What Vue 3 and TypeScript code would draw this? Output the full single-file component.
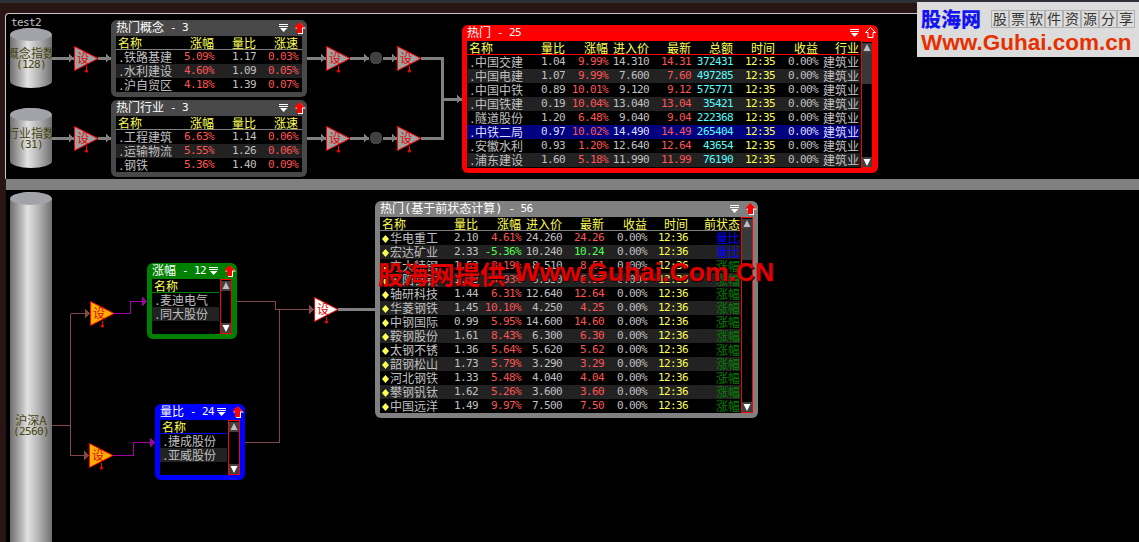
<script setup lang="ts">
interface Col {
  label: string
  w: number
  kind?: 'name' | 'red' | 'plain' | 'cyan' | 'time' | 'cjk' | 'state'
}
interface Row {
  cells: string[]
  down?: boolean
  selected?: boolean
}
interface Panel {
  id: string
  title: string
  count: number
  x: number
  y: number
  w: number
  h: number
  color: string
  line: string
  bullet?: boolean
  outlineArrow?: boolean
  scroll?: 'thumb' | 'plain'
  cols: Col[]
  rows: Row[]
}

const toRows = (list: string[][]): Row[] => list.map((cells) => ({ cells }))

const sectorCols: Col[] = [
  { label: '名称', w: 56, kind: 'name' },
  { label: '涨幅', w: 42, kind: 'red' },
  { label: '量比', w: 42, kind: 'plain' },
  { label: '涨速', w: 42, kind: 'red' },
]

const hotRows = toRows([
  ['中国交建', '1.04', '9.99%', '14.310', '14.31', '372431', '12:35', '0.00%', '建筑业'],
  ['中国电建', '1.07', '9.99%', '7.600', '7.60', '497285', '12:35', '0.00%', '建筑业'],
  ['中国中铁', '0.89', '10.01%', '9.120', '9.12', '575771', '12:35', '0.00%', '建筑业'],
  ['中国铁建', '0.19', '10.04%', '13.040', '13.04', '35421', '12:35', '0.00%', '建筑业'],
  ['隧道股份', '1.20', '6.48%', '9.040', '9.04', '222368', '12:35', '0.00%', '建筑业'],
  ['中铁二局', '0.97', '10.02%', '14.490', '14.49', '265404', '12:35', '0.00%', '建筑业'],
  ['安徽水利', '0.93', '1.20%', '12.640', '12.64', '43654', '12:35', '0.00%', '建筑业'],
  ['浦东建设', '1.60', '5.18%', '11.990', '11.99', '76190', '12:35', '0.00%', '建筑业'],
])
hotRows[5].selected = true

const stateRows = toRows([
  ['华电重工', '2.10', '4.61%', '24.260', '24.26', '0.00%', '12:36', '量比'],
  ['宏达矿业', '2.33', '-5.36%', '10.240', '10.24', '0.00%', '12:36', '量比'],
  ['方大特钢', '1.52', '8.19%', '8.510', '8.51', '0.00%', '12:36', '涨幅'],
  ['安阳钢铁', '1.38', '6.93%', '6.530', '6.53', '0.00%', '12:36', '涨幅'],
  ['轴研科技', '1.44', '6.31%', '12.640', '12.64', '0.00%', '12:36', '涨幅'],
  ['华菱钢铁', '1.45', '10.10%', '4.250', '4.25', '0.00%', '12:36', '涨幅'],
  ['中钢国际', '0.99', '5.95%', '14.600', '14.60', '0.00%', '12:36', '涨幅'],
  ['鞍钢股份', '1.61', '8.43%', '6.300', '6.30', '0.00%', '12:36', '涨幅'],
  ['太钢不锈', '1.36', '5.64%', '5.620', '5.62', '0.00%', '12:36', '涨幅'],
  ['韶钢松山', '1.73', '5.79%', '3.290', '3.29', '0.00%', '12:36', '涨幅'],
  ['河北钢铁', '1.33', '5.48%', '4.040', '4.04', '0.00%', '12:36', '涨幅'],
  ['攀钢钒钛', '1.62', '5.26%', '3.600', '3.60', '0.00%', '12:36', '涨幅'],
  ['中国远洋', '1.49', '9.97%', '7.500', '7.50', '0.00%', '12:36', '涨幅'],
])
stateRows[1].down = true

const GREY = '#808080'
const BROWN = '#804848'
const PURPLE = '#a000a0'
const NODE_GREY = '#a0a0a0'
const NODE_ORANGE = '#ffb000'

// everything below is in page coordinates, place() moves it into its pane
const panes = [
  {
    id: 'top',
    label: 'test2',
    origin: { x: 6, y: 14 },
    size: { w: 1133, h: 165 },
    wires: [
      { d: 'M52 58H74M98 58H111M307 58H326M350 58H369M383 58H397M421 58H442V138H421', color: GREY, width: 3 },
      { d: 'M52 138H74M98 138H111M307 138H326M350 138H369M383 138H397M442 99H462', color: GREY, width: 3 },
    ],
    arrows: [74, 111, 326, 369, 397]
      .flatMap((x) => [
        { x, y: 58, color: GREY },
        { x, y: 138, color: GREY },
      ])
      .concat([{ x: 462, y: 99, color: GREY }]),
    joints: [
      { x: 376, y: 58 },
      { x: 376, y: 138 },
    ],
    triangles: [74, 326, 397].flatMap((x) => [
      { x, y: 46, fill: NODE_GREY },
      { x, y: 126, fill: NODE_GREY },
    ]),
    cylinders: [
      { id: 'a', x: 10, y: 28, h: 60, name: '概念指数', count: '(128)' },
      { id: 'b', x: 10, y: 108, h: 60, name: '行业指数', count: '(31)' },
    ],
    panels: [
      {
        id: 'concept', title: '热门概念', count: 3, x: 111, y: 20, w: 196, h: 77, color: '#484848', line: '#808080',
        cols: sectorCols,
        rows: toRows([
          ['铁路基建', '5.09%', '1.17', '0.03%'],
          ['水利建设', '4.60%', '1.09', '0.05%'],
          ['沪自贸区', '4.18%', '1.39', '0.07%'],
        ]),
      },
      {
        id: 'industry', title: '热门行业', count: 3, x: 111, y: 100, w: 196, h: 77, color: '#484848', line: '#808080',
        cols: sectorCols,
        rows: toRows([
          ['工程建筑', '6.63%', '1.14', '0.06%'],
          ['运输物流', '5.55%', '1.26', '0.06%'],
          ['钢铁', '5.36%', '1.40', '0.09%'],
        ]),
      },
      {
        id: 'hot', title: '热门', count: 25, x: 462, y: 25, w: 416, h: 148, color: '#ff0000', line: '#ff0000',
        scroll: 'thumb', outlineArrow: true,
        cols: [
          { label: '名称', w: 56, kind: 'name' },
          { label: '量比', w: 42, kind: 'plain' },
          { label: '涨幅', w: 43, kind: 'red' },
          { label: '进入价', w: 41, kind: 'plain' },
          { label: '最新', w: 42, kind: 'red' },
          { label: '总额', w: 42, kind: 'cyan' },
          { label: '时间', w: 42, kind: 'time' },
          { label: '收益', w: 43, kind: 'plain' },
          { label: '行业', w: 41, kind: 'cjk' },
        ],
        rows: hotRows,
      },
    ] as Panel[],
  },
  {
    id: 'bottom',
    label: '',
    origin: { x: 6, y: 190 },
    size: { w: 1133, h: 352 },
    wires: [
      { d: 'M52 425.5H70.5M70.5 313.5V455.5M70.5 313.5H90M70.5 455.5H89', color: BROWN, width: 1 },
      { d: 'M237 301.5H275.5V309.5H314M245 442.5H279.5V309.5', color: BROWN, width: 1 },
      { d: 'M114 313.5H130.5V301.5H147M113 455.5H133.5V442.5H155', color: PURPLE, width: 1 },
      { d: 'M338 309.5H375', color: GREY, width: 3 },
    ],
    arrows: [
      { x: 90, y: 313.5, color: BROWN },
      { x: 89, y: 455.5, color: BROWN },
      { x: 314, y: 309.5, color: BROWN },
      { x: 147, y: 301.5, color: PURPLE },
      { x: 155, y: 442.5, color: PURPLE },
    ],
    joints: [],
    triangles: [
      { x: 90, y: 301, fill: NODE_ORANGE },
      { x: 89, y: 443, fill: NODE_ORANGE },
      { x: 314, y: 297, fill: '#ffffff' },
    ],
    cylinders: [{ id: 'c', x: 10, y: 192, h: 467, name: '沪深A', count: '(2560)' }],
    panels: [
      {
        id: 'chg', title: '涨幅', count: 12, x: 147, y: 263, w: 90, h: 76, color: '#008000', line: '#008000', scroll: 'plain',
        cols: [{ label: '名称', w: 68, kind: 'name' }],
        rows: toRows([['麦迪电气'], ['同大股份']]),
      },
      {
        id: 'ratio', title: '量比', count: 24, x: 155, y: 404, w: 90, h: 76, color: '#0000ff', line: '#0000ff', scroll: 'plain',
        cols: [{ label: '名称', w: 68, kind: 'name' }],
        rows: toRows([['捷成股份'], ['亚威股份']]),
      },
      {
        id: 'state', title: '热门(基于前状态计算)', count: 56, x: 375, y: 201, w: 383, h: 217, color: '#808080', line: '#808080',
        bullet: true, scroll: 'thumb',
        cols: [
          { label: '名称', w: 55, kind: 'name' },
          { label: '量比', w: 43, kind: 'plain' },
          { label: '涨幅', w: 43, kind: 'red' },
          { label: '进入价', w: 41, kind: 'plain' },
          { label: '最新', w: 42, kind: 'red' },
          { label: '收益', w: 43, kind: 'plain' },
          { label: '时间', w: 41, kind: 'time' },
          { label: '前状态', w: 52, kind: 'state' },
        ],
        rows: stateRows,
      },
    ] as Panel[],
  },
]

const logoTiles = ['股', '票', '软', '件', '资', '源', '分', '享']

function place(n: { x: number; y: number; w?: number; h?: number }, origin: { x: number; y: number }) {
  return {
    left: `${n.x - origin.x}px`,
    top: `${n.y - origin.y}px`,
    width: n.w ? `${n.w}px` : undefined,
    height: n.h ? `${n.h}px` : undefined,
  }
}

function arrowPoints(a: { x: number; y: number }) {
  return `${a.x},${a.y} ${a.x - 5},${a.y - 4.5} ${a.x - 5},${a.y + 4.5}`
}

function gridOf(p: Panel) {
  return { gridTemplateColumns: p.cols.map((c) => `${c.w}px`).join(' ') }
}

function cellClass(col: Col, row: Row, value: string) {
  if (col.kind === 'red' && row.down) return 'c-green'
  if (col.kind === 'state') return value === '量比' ? 'c-state-blue cjk' : 'c-state-green cjk'
  return `c-${col.kind ?? 'plain'}`
}
</script>

<template>
  <div class="screen">
    <div class="titlebar"></div>
    <div class="menubar"></div>

    <template v-for="(pane, n) in panes" :key="pane.id">
      <div v-if="n > 0" class="splitter"></div>
      <section class="pane" :class="`pane-${pane.id}`">
        <span v-if="pane.label" class="pane-name">{{ pane.label }}</span>

        <svg
          class="wires"
          :viewBox="`${pane.origin.x} ${pane.origin.y} ${pane.size.w} ${pane.size.h}`"
          :width="pane.size.w"
          :height="pane.size.h"
        >
          <path v-for="w in pane.wires" :key="w.d" :d="w.d" fill="none" :stroke="w.color" :stroke-width="w.width" />
          <polygon v-for="a in pane.arrows" :key="`${a.x}-${a.y}`" :points="arrowPoints(a)" :fill="a.color" />
          <circle v-for="j in pane.joints" :key="j.y" :cx="j.x" :cy="j.y" r="6.5" fill="#404040" />
        </svg>

        <div v-for="c in pane.cylinders" :key="c.id" class="cyl" :style="place(c, pane.origin)">
          <span>{{ c.name }}</span>
          <span class="cyl-count">{{ c.count }}</span>
        </div>

        <svg
          v-for="t in pane.triangles"
          :key="`${t.x}-${t.y}`"
          class="tri"
          :style="place(t, pane.origin)"
          width="25"
          height="28"
          viewBox="0 0 25 28"
        >
          <path d="M12.5 20V24" stroke="#ff0000" />
          <circle cx="12.5" cy="25" r="1.6" fill="#ff0000" />
          <polygon points="0.5,0.5 24,12.5 0.5,24.5" :fill="t.fill" stroke="#ff0000" />
          <text x="3" y="17" class="tri-text">设</text>
        </svg>

        <div
          v-for="p in pane.panels"
          :key="p.id"
          class="panel"
          :style="[place(p, pane.origin), { background: p.color }]"
        >
          <div class="panel-title">
            <span class="title-text">{{ p.title }}</span>
            <span class="mono suffix"> - {{ p.count }}</span>
            <svg class="ico-menu" width="10" height="10" viewBox="0 0 10 10">
              <path d="M0 1.5H9M0 3.5H9" stroke="#fff" />
              <path d="M1 5H8.5L4.5 9Z" fill="#fff" />
            </svg>
            <svg class="ico-up" width="12" height="12" viewBox="0 0 12 12">
              <template v-if="p.outlineArrow">
                <path d="M5.5 0.5L10.5 5.5H8V10.5H3V5.5H0.5Z" fill="#ff0000" stroke="#fff" />
              </template>
              <template v-else>
                <path d="M6.5 1L12 6.5H9V12H4V6.5H1Z" fill="#fff" />
                <path d="M5.5 0L11 5.5H8V11H3V5.5H0Z" fill="#ff0000" />
              </template>
            </svg>
          </div>
          <div class="panel-body">
            <div class="table">
              <div class="head" :style="[gridOf(p), { borderColor: p.line }]">
                <span v-for="c in p.cols" :key="c.label" :class="{ left: c.kind === 'name' }">{{ c.label }}</span>
              </div>
              <div
                v-for="r in p.rows"
                :key="r.cells[0]"
                class="row"
                :class="{ selected: r.selected }"
                :style="gridOf(p)"
              >
                <template v-for="(c, i) in p.cols" :key="c.label">
                  <span v-if="c.kind === 'name'" class="name"
                    ><i v-if="p.bullet" class="bullet"></i><span v-else class="dot mono">.</span>{{ r.cells[i] }}</span
                  >
                  <span v-else class="cell" :class="cellClass(c, r, r.cells[i])">{{ r.cells[i] }}</span>
                </template>
              </div>
            </div>
            <div v-if="p.scroll" class="scroll" :class="{ 'scroll-small': p.scroll === 'plain' }">
              <svg class="scroll-btn" width="10" height="10" viewBox="0 0 10 10">
                <rect width="10" height="10" fill="#404040" />
                <path d="M5 1L8.5 8H1.5Z" fill="#c0c0c0" />
              </svg>
              <div class="thumb"></div>
              <svg class="scroll-btn" width="10" height="10" viewBox="0 0 10 10">
                <rect width="10" height="10" fill="#404040" />
                <path d="M1.5 2H8.5L5 9Z" fill="#fff" />
              </svg>
            </div>
          </div>
        </div>
      </section>
    </template>

    <div class="logo">
      <div class="logo-top">
        <strong class="logo-name">股海网</strong>
        <div class="logo-tiles">
          <span v-for="t in logoTiles" :key="t">{{ t }}</span>
        </div>
      </div>
      <div class="logo-url">Www.Guhai.com.cn</div>
    </div>

    <div class="watermark">
      <span class="watermark-cn">股海网提供</span>
      <span class="watermark-en">Www.Guhai.Com.CN</span>
    </div>
  </div>
</template>

<style scoped>
.screen {
  position: relative;
  width: 1139px;
  height: 542px;
  overflow: hidden;
  display: flex;
  flex-direction: column;
  background: #2a1515;
  font-family: "Noto Sans CJK SC", "DejaVu Sans", sans-serif;
  font-size: 12px;
}
.titlebar {
  height: 3px;
  background: #2e3038;
}
.menubar {
  height: 10px;
}
.pane {
  position: relative;
  background: #000;
  overflow: hidden;
}
.pane-top {
  height: 166px;
  margin-left: 5px;
  border-top: 1px solid #c8c8c8;
  border-left: 1px solid #c8c8c8;
  border-top-left-radius: 4px;
  box-sizing: border-box;
}
.pane-bottom {
  flex: 1;
  margin-left: 6px;
}
.splitter {
  height: 11px;
  margin-left: 6px;
  background: #808080;
}
.pane-name {
  position: absolute;
  left: 5px;
  top: 2px;
  color: #c0c0c0;
  font: 11px/14px "DejaVu Sans Mono", monospace;
  letter-spacing: -0.6px;
}
.wires {
  position: absolute;
  left: 0;
  top: 0;
  shape-rendering: crispEdges;
}
.tri {
  position: absolute;
}
.tri-text {
  fill: #e00000;
  font-size: 12px;
  font-family: "Noto Sans CJK SC", sans-serif;
}

.cyl {
  position: absolute;
  width: 42px;
  box-sizing: border-box;
  display: flex;
  flex-direction: column;
  align-items: center;
  justify-content: center;
  overflow: hidden;
  border-radius: 21px / 7px;
  background: linear-gradient(90deg, #6f6f6f 0%, #a8a8a8 22%, #e2e2e2 42%, #b4b4b4 68%, #707070 100%);
  color: #45450f;
  font-size: 12px;
  line-height: 12px;
  white-space: nowrap;
}
.cyl::before {
  content: "";
  position: absolute;
  left: 0;
  right: 0;
  top: 0;
  height: 13px;
  border-radius: 50%;
  background: #a2a2aa;
}
.cyl-count {
  font-family: "DejaVu Sans Mono", monospace;
  font-size: 11px;
  line-height: 11px;
  letter-spacing: -0.6px;
}

.panel {
  position: absolute;
  box-sizing: border-box;
  display: flex;
  flex-direction: column;
  padding: 0 1px 5px 5px;
  border-radius: 6px;
}
.panel-title {
  height: 16px;
  flex: none;
  display: flex;
  align-items: center;
  color: #fff;
  line-height: 16px;
  white-space: pre;
}
.title-text {
  font-family: "DejaVu Sans Mono", "Noto Sans CJK SC", monospace;
  font-size: 12px;
}
.ico-menu {
  margin-left: auto;
  flex: none;
}
.ico-up {
  margin-left: 5px;
  flex: none;
}
.panel-body {
  flex: 1;
  min-height: 0;
  display: flex;
  margin-right: 4px;
  background: #000;
}
.table {
  flex: 1;
  min-width: 0;
  overflow: hidden;
}
.head,
.row {
  display: grid;
  height: 14px;
  line-height: 14px;
  white-space: nowrap;
}
.head {
  box-sizing: border-box;
  border-bottom: 1px solid;
  line-height: 13px;
  color: #ffff54;
  text-align: right;
}
.head .left {
  text-align: left;
  padding-left: 2px;
}
.row:nth-of-type(odd) {
  background: #222;
}
.row.selected {
  background: #000080;
}
.row.selected .name,
.row.selected .c-plain,
.row.selected .c-cjk {
  color: #dcdcff;
}
.name {
  color: #c0c0c0;
  padding-left: 2px;
}
.dot {
  display: inline-block;
  width: 6px;
}
.bullet {
  display: inline-block;
  width: 7px;
  height: 8px;
  margin-right: 1px;
  background: #ffff54;
  clip-path: polygon(50% 0, 100% 50%, 50% 100%, 0 50%);
}
.mono,
.cell {
  font-family: "DejaVu Sans Mono", "Noto Sans CJK SC", monospace;
  font-size: 11px;
  letter-spacing: -0.6px;
}
.cjk,
.c-cjk {
  font-family: "Noto Sans CJK SC", sans-serif;
  font-size: 12px;
  letter-spacing: 0;
}
.cell {
  text-align: right;
}
.c-plain,
.c-cjk {
  color: #c0c0c0;
}
.c-red {
  color: #ff5454;
}
.c-green {
  color: #54ff54;
}
.c-cyan {
  color: #54ffff;
}
.c-time {
  color: #ffff54;
}
.c-state-blue {
  color: #0000ff;
}
.c-state-green {
  color: #008000;
}

.scroll {
  flex: none;
  width: 12px;
  box-sizing: border-box;
  margin-left: 1px;
  padding-top: 1px;
  border: 1px solid #ff0000;
  background: #000;
  display: flex;
  flex-direction: column;
  justify-content: space-between;
}
.scroll-btn {
  flex: none;
  display: block;
}
.thumb {
  width: 10px;
  height: 31px;
  margin-bottom: auto;
  background: #383838;
}
.scroll-small .thumb {
  height: 0;
}

.logo {
  position: absolute;
  left: 917px;
  top: 2px;
  width: 222px;
  height: 55px;
  box-sizing: border-box;
  padding: 5px 4px 0;
  background: #dcdcdc;
}
.logo-top {
  display: flex;
  align-items: center;
  justify-content: space-between;
  height: 24px;
}
.logo-name {
  color: #1414f0;
  font-size: 20px;
  font-weight: 900;
  line-height: 24px;
}
.logo-tiles {
  display: flex;
}
.logo-tiles span {
  width: 18px;
  height: 18px;
  box-sizing: border-box;
  border: 1px solid #b0b0b0;
  color: #333;
  font-size: 14px;
  line-height: 15px;
  text-align: center;
}
.logo-url {
  margin-top: 1px;
  color: #e63000;
  font: bold 22.5px/22px "Liberation Sans", sans-serif;
  white-space: nowrap;
}

.watermark {
  position: absolute;
  left: 378px;
  top: 254px;
  display: flex;
  align-items: center;
  gap: 9px;
  height: 36px;
  color: #e20000;
  font-weight: bold;
  white-space: nowrap;
  text-shadow: 1px 1px 0 #200000;
}
.watermark-cn {
  font-family: "Noto Sans CJK SC", sans-serif;
  font-size: 25.5px;
}
.watermark-en {
  font-family: "Liberation Sans", sans-serif;
  font-size: 26.5px;
}
</style>

<style>
body {
  overflow: hidden;
}
</style>
